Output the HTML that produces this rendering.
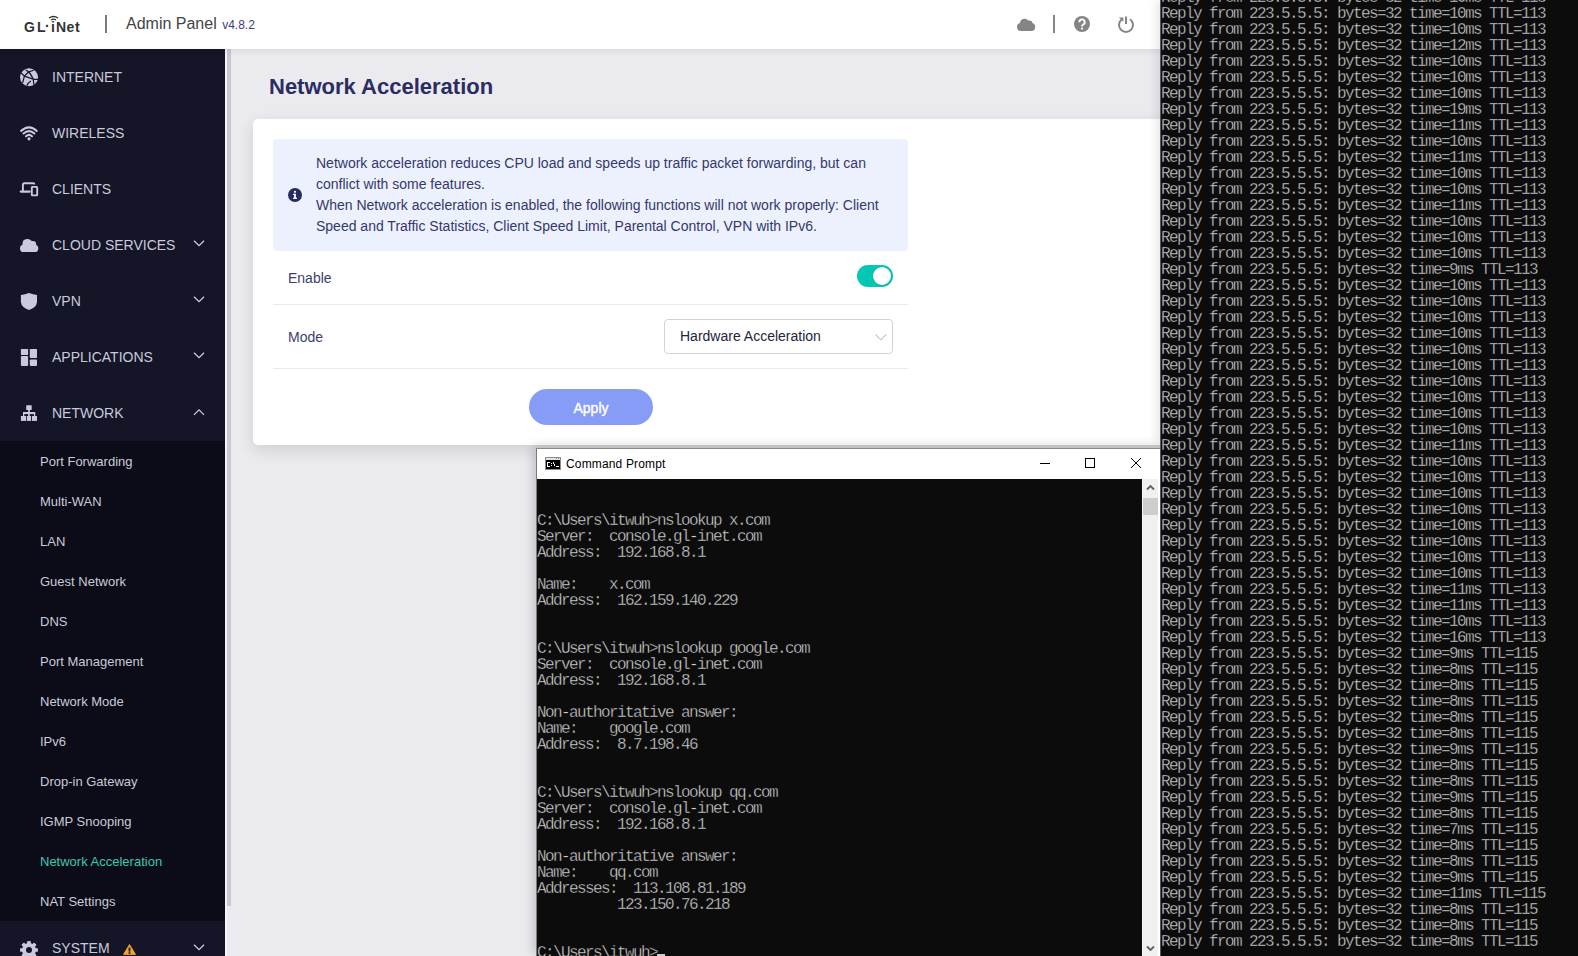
<!DOCTYPE html>
<html><head><meta charset="utf-8">
<style>
*{margin:0;padding:0;box-sizing:border-box}
html,body{width:1578px;height:956px;overflow:hidden;background:#ebeaef;font-family:"Liberation Sans",sans-serif;position:relative}
.abs{position:absolute}
#header{left:0;top:0;width:1578px;height:49px;background:#fff;box-shadow:0 1px 8px rgba(0,0,0,.10);z-index:4}
#sidebar{left:0;top:49px;width:225px;height:907px;background:#141527;z-index:2}
#sbwhite{left:225px;top:49px;width:2px;height:907px;background:#f6f6fa;z-index:2}
#sbthumb{left:227px;top:49px;width:4px;height:857px;background:#c8c9d5;z-index:2}
.mi{position:absolute;left:0;width:225px;height:56px;color:#c9cadb;font-size:14px;}
.mi .t{position:absolute;left:52px;top:19px;line-height:18px;white-space:nowrap}
.mi svg.ic{position:absolute;left:20px;top:17px;width:20px;height:20px;overflow:visible}
.mi svg.ch{position:absolute;left:193px;top:23px;width:12px;height:8px;overflow:visible}
#submenu{left:0;top:441px;width:225px;height:480px;background:#0b0c17;z-index:3}
.si{position:absolute;left:40px;font-size:13px;color:#c9cadb;line-height:16px;white-space:nowrap}
#title{left:269px;top:74px;font-size:22px;font-weight:bold;color:#2a2d62;line-height:26px;white-space:nowrap}
#card{left:253px;top:119px;width:940px;height:326px;background:#fff;border-radius:5px;box-shadow:0 5px 16px rgba(0,0,0,.12)}
#info{left:273px;top:139px;width:635px;height:112px;background:#edf1fd;border-radius:4px}
.itxt{position:absolute;left:316px;font-size:14px;color:#34386c;line-height:21px;white-space:nowrap}
.lbl{position:absolute;left:288px;font-size:14px;color:#3b3e70;line-height:18px}
.hr{position:absolute;left:273px;width:635px;height:1px;background:#e9e9ef}
#toggle{left:857px;top:265px;width:36px;height:22px;border-radius:11px;background:#03c6b3}
#knob{left:873px;top:267px;width:18px;height:18px;border-radius:50%;background:#fff;box-shadow:0 0 2px rgba(0,0,0,.15)}
#select{left:664px;top:319px;width:229px;height:35px;border:1px solid #d3d4db;border-radius:4px;background:#fff}
#apply{left:529px;top:389px;width:124px;height:36px;border-radius:18px;background:#869cf7;color:#fff;font-size:14px;text-align:center;line-height:38px;-webkit-text-stroke:0.4px #fff}
#rterm{left:1160px;top:0;width:418px;height:956px;background:#0c0c0c;border-left:1px solid #5a5a5a;z-index:10;box-shadow:-3px 0 10px rgba(0,0,0,.10)}
pre.mono{font-family:"Liberation Mono",monospace;font-size:16px;letter-spacing:-1.6px;line-height:16px;color:#d4d4d4;white-space:pre;-webkit-text-stroke:0.35px #0c0c0c}
#rtext{z-index:11;left:1161px;top:-10px}
#cmd{left:536px;top:448px;width:624px;height:508px;background:#fff;border-top:1px solid #8a8a8a;border-left:1px solid #7a7a7a;z-index:12;box-shadow:-3px -2px 10px rgba(0,0,0,.18)}
#cmdcon{left:537px;top:479px;width:605px;height:477px;background:#0c0c0c;overflow:hidden;z-index:13}
#cmdtext{left:537px;top:481px;z-index:14}
#cmdsb{left:1142px;top:479px;width:16px;height:477px;background:#f0f0f0;border-left:1px solid #fafafa;z-index:13}
</style></head><body>
<div id="header" class="abs">
  <div class="abs" style="left:24px;top:18px;font-size:14px;font-weight:bold;color:#333;line-height:18px">
    <span class="abs" style="left:0">G</span><span class="abs" style="left:13px">L</span><span class="abs" style="left:21px;top:-1px">·</span><span class="abs" style="left:27px">i</span><span class="abs" style="left:32px">N</span><span class="abs" style="left:42.5px">e</span><span class="abs" style="left:51px">t</span>
  </div>
  <svg class="abs" style="left:48px;top:15.4px" width="11" height="6" viewBox="0 0 11 6"><path d="M1 3Q5.5 0 10 3" fill="none" stroke="#333" stroke-width="1.3"/><path d="M3 5Q5.5 3.3 8 5" fill="none" stroke="#333" stroke-width="1.3"/></svg>
  <div class="abs" style="left:105px;top:15px;width:2px;height:18px;background:#7a7a7a"></div>
  <div class="abs" style="left:126px;top:14px;font-size:16px;color:#444;line-height:20px;white-space:nowrap">Admin Panel <span style="font-size:12px;color:#3b3e7a;margin-left:1px">v4.8.2</span></div>
  <svg class="abs" style="left:1017px;top:18px" width="19" height="13" viewBox="0 0 19 13"><circle cx="7.5" cy="5.3" r="4.6" fill="#858585"/><circle cx="12.3" cy="5.8" r="3.2" fill="#858585"/><rect x="0" y="5" width="18.2" height="8" rx="4" fill="#858585"/></svg>
  <div class="abs" style="left:1053px;top:15px;width:2px;height:18px;background:#858585"></div>
  <svg class="abs" style="left:1074px;top:16px" width="16" height="16" viewBox="0 0 16 16"><circle cx="8" cy="8" r="8" fill="#858585"/><path d="M5.3 6.2a2.7 2.7 0 1 1 4 2.3c-.9.5-1.3.9-1.3 1.9" fill="none" stroke="#fff" stroke-width="1.9"/><circle cx="8" cy="12.6" r="1.1" fill="#fff"/></svg>
  <svg class="abs" style="left:1117px;top:15px" width="18" height="18" viewBox="0 0 18 18"><path d="M5 4.2A7 7 0 1 0 13 4.2" fill="none" stroke="#858585" stroke-width="2"/><path d="M1.8 2.6h4.6v4.2z" fill="#858585"/><path d="M9 1.5v7.5" stroke="#858585" stroke-width="2"/></svg>
</div>

<div id="sidebar" class="abs"></div>
<div id="sbwhite" class="abs"></div>
<div id="sbthumb" class="abs"></div>

<div class="abs" style="left:0;top:49px;width:225px;height:392px;z-index:3">
  <div class="mi" style="top:0px"><svg class="ic" viewBox="0 0 20 20" style="top:19px"><circle cx="9.05" cy="9.25" r="9" fill="#c9cadb"/><path d="M5.6 2L8.8 3.75L13.65 2.26M8.8 3.75L4.4 8.1L1.2 5M4.4 8.1L2.6 14.8M4.4 8.1L13.2 11.1L18.2 11.35M8.8 3.75Q11.8 7.7 13.2 11.1L13.9 16.6M6.8 17.6Q8.3 14.6 10.9 13" fill="none" stroke="#141527" stroke-width="1.25"/></svg><span class="t">INTERNET</span></div>
  <div class="mi" style="top:56px"><svg class="ic" viewBox="0 0 20 20" style="top:21px"><path d="M1.1 4.9Q9 -2.3 16.8 4.9M3.5 7.5Q9 2.6 14.4 7.5M6 10.3Q9 7.6 12 10.3" fill="none" stroke="#c9cadb" stroke-width="2.1" stroke-linecap="round"/><circle cx="9" cy="12.8" r="1.6" fill="#c9cadb"/></svg><span class="t">WIRELESS</span></div>
  <div class="mi" style="top:112px"><svg class="ic" viewBox="0 0 20 20" style="top:21px"><path d="M2.9 9.6V2.6Q2.9 1.2 4.3 1.2H13.2Q14.4 1.2 14.4 2.6" fill="none" stroke="#c9cadb" stroke-width="1.9"/><path d="M0.8 9.6H9.6" stroke="#c9cadb" stroke-width="2.3" stroke-linecap="round"/><rect x="11.8" y="4.9" width="5.4" height="8.5" rx="0.6" fill="none" stroke="#c9cadb" stroke-width="1.9"/></svg><span class="t">CLIENTS</span></div>
  <div class="mi" style="top:168px"><svg class="ic" viewBox="0 0 20 20" style="top:21px"><circle cx="7.3" cy="5.8" r="4.9" fill="#c9cadb"/><circle cx="12.8" cy="6.4" r="3.4" fill="#c9cadb"/><rect x="0" y="6.8" width="18.3" height="7.2" rx="3.6" fill="#c9cadb"/></svg><span class="t">CLOUD SERVICES</span><svg class="ch" viewBox="0 0 12 8"><path d="M1 .7l5 5 5-5" fill="none" stroke="#c9cadb" stroke-width="1.3"/></svg></div>
  <div class="mi" style="top:224px"><svg class="ic" viewBox="0 0 20 20" style="top:19px"><path d="M9 0.9Q13 2.3 17 3.1V10Q16.5 15.5 9 18Q1.5 15.5 0.9 10V3.1Q5 2.3 9 0.9Z" fill="#c9cadb"/></svg><span class="t">VPN</span><svg class="ch" viewBox="0 0 12 8"><path d="M1 .7l5 5 5-5" fill="none" stroke="#c9cadb" stroke-width="1.3"/></svg></div>
  <div class="mi" style="top:280px"><svg class="ic" viewBox="0 0 20 20" style="top:19px"><rect x="0.9" y="0.9" width="7.2" height="6" rx="0.6" fill="#c9cadb"/><rect x="9.8" y="0.9" width="7.2" height="9" rx="0.6" fill="#c9cadb"/><rect x="0.9" y="8.1" width="7.2" height="9.8" rx="0.8" fill="#c9cadb"/><rect x="9.8" y="11.5" width="7.2" height="6.4" rx="0.8" fill="#c9cadb"/></svg><span class="t">APPLICATIONS</span><svg class="ch" viewBox="0 0 12 8"><path d="M1 .7l5 5 5-5" fill="none" stroke="#c9cadb" stroke-width="1.3"/></svg></div>
  <div class="mi" style="top:336px"><svg class="ic" viewBox="0 0 20 20" style="top:19px"><rect x="6.2" y="1.2" width="5.5" height="4.9" rx="0.6" fill="#c9cadb"/><rect x="8.1" y="6" width="1.7" height="6" fill="#c9cadb"/><rect x="3" y="8" width="12.2" height="2.1" fill="#c9cadb"/><rect x="3" y="9" width="1.3" height="3" fill="#c9cadb"/><rect x="13.9" y="9" width="1.3" height="3" fill="#c9cadb"/><rect x="0.9" y="12" width="5.2" height="4.9" fill="#c9cadb"/><rect x="6.9" y="12" width="4.2" height="4.9" fill="#c9cadb"/><rect x="12" y="12" width="5" height="4.9" fill="#c9cadb"/></svg><span class="t">NETWORK</span><svg class="ch" viewBox="0 0 12 8"><path d="M1 6.9l5-5 5 5" fill="none" stroke="#c9cadb" stroke-width="1.3"/></svg></div>
</div>

<div id="submenu" class="abs">
  <div class="si" style="top:13px">Port Forwarding</div>
  <div class="si" style="top:53px">Multi-WAN</div>
  <div class="si" style="top:93px">LAN</div>
  <div class="si" style="top:133px">Guest Network</div>
  <div class="si" style="top:173px">DNS</div>
  <div class="si" style="top:213px">Port Management</div>
  <div class="si" style="top:253px">Network Mode</div>
  <div class="si" style="top:293px">IPv6</div>
  <div class="si" style="top:333px">Drop-in Gateway</div>
  <div class="si" style="top:373px">IGMP Snooping</div>
  <div class="si" style="top:413px;color:#3ec7b3">Network Acceleration</div>
  <div class="si" style="top:453px">NAT Settings</div>
</div>
<div class="abs" style="left:0;top:921px;width:225px;height:35px;z-index:3;overflow:hidden">
  <div class="mi" style="top:0px"><svg class="ic" viewBox="0 0 20 20" style="top:20px;left:19px"><g fill="#c9cadb"><circle cx="10" cy="9" r="7"/><rect x="8.2" y="0" width="3.6" height="18" rx="0.8"/><rect x="8.2" y="0" width="3.6" height="18" rx="0.8" transform="rotate(45 10 9)"/><rect x="8.2" y="0" width="3.6" height="18" rx="0.8" transform="rotate(90 10 9)"/><rect x="8.2" y="0" width="3.6" height="18" rx="0.8" transform="rotate(135 10 9)"/></g><circle cx="10" cy="9" r="3" fill="#141527"/></svg><span class="t" style="top:18px">SYSTEM</span>
  <svg class="abs" style="left:123px;top:23px" width="13" height="11" viewBox="0 0 13 11"><path d="M6.5 0.5L12.6 10.6H0.4Z" fill="#f5a623" stroke="#f5a623" stroke-width="0.8" stroke-linejoin="round"/><rect x="5.6" y="3.6" width="1.8" height="4" fill="#141527"/><rect x="5.6" y="8.2" width="1.8" height="1.6" fill="#141527"/></svg>
  <svg class="ch" viewBox="0 0 12 8"><path d="M1 .7l5 5 5-5" fill="none" stroke="#c9cadb" stroke-width="1.3"/></svg></div>
</div>

<div id="title" class="abs">Network Acceleration</div>
<div id="card" class="abs"></div>
<div id="info" class="abs"></div>
<svg class="abs" style="left:288px;top:188px" width="14" height="14" viewBox="0 0 14 14"><circle cx="7" cy="7" r="7" fill="#262b60"/><rect x="6.1" y="5.8" width="1.8" height="4.6" fill="#fff"/><rect x="5" y="5.8" width="2.5" height="1.2" fill="#fff"/><rect x="5" y="9.6" width="4" height="1.3" fill="#fff"/><circle cx="7" cy="3.8" r="1.1" fill="#fff"/></svg>
<div class="itxt" style="top:153px">Network acceleration reduces CPU load and speeds up traffic packet forwarding, but can</div>
<div class="itxt" style="top:174px">conflict with some features.</div>
<div class="itxt" style="top:195px">When Network acceleration is enabled, the following functions will not work properly: Client</div>
<div class="itxt" style="top:216px">Speed and Traffic Statistics, Client Speed Limit, Parental Control, VPN with IPv6.</div>
<div class="lbl" style="top:269px">Enable</div>
<div id="toggle" class="abs"></div><div id="knob" class="abs"></div>
<div class="hr" style="top:304px"></div>
<div class="lbl" style="top:328px">Mode</div>
<div id="select" class="abs"><span class="abs" style="left:15px;top:8px;font-size:14px;color:#23253a;white-space:nowrap">Hardware Acceleration</span>
<svg class="abs" style="left:210px;top:14px" width="12" height="7" viewBox="0 0 12 7"><path d="M.5 .5l5.3 5.3 5.3-5.3" fill="none" stroke="#c3c5ce" stroke-width="1.1"/></svg></div>
<div class="hr" style="top:368px"></div>
<div id="apply" class="abs">Apply</div>

<div id="cmd" class="abs"></div>
<svg class="abs" style="left:545px;top:457px;z-index:13" width="16" height="13" viewBox="0 0 16 13"><rect x="0" y="0" width="16" height="13" fill="#8c8c8c"/><rect x="1" y="1" width="14" height="2" fill="#dfe3ea"/><rect x="11" y="1" width="1" height="1" fill="#7a8ab0"/><rect x="13" y="1" width="1" height="1" fill="#7a8ab0"/><rect x="1" y="3" width="14" height="9" fill="#000"/><g fill="#fff"><rect x="2" y="5" width="3" height="1"/><rect x="2" y="9" width="3" height="1"/><rect x="2" y="5" width="1" height="5"/><rect x="6" y="6" width="1" height="1"/><rect x="6" y="8" width="1" height="1"/><rect x="8" y="5" width="1" height="2"/><rect x="9" y="7" width="1" height="2"/><rect x="11" y="9" width="3" height="1"/></g></svg>
<div class="abs" style="left:566px;top:457px;font-size:12px;color:#000;line-height:15px;z-index:13;letter-spacing:0.15px">Command Prompt</div>
<svg class="abs" style="left:1036px;top:454px;z-index:13" width="110" height="18" viewBox="0 0 110 18"><path d="M4 9.5h10" stroke="#000" stroke-width="1"/><rect x="49.5" y="4.5" width="9" height="9" fill="none" stroke="#000" stroke-width="1"/><path d="M95 4l10 10M105 4l-10 10" stroke="#000" stroke-width="1"/></svg>
<div id="cmdcon" class="abs"></div>
<pre id="cmdtext" class="abs mono">


C:\Users\itwuh&gt;nslookup x.com
Server:  console.gl-inet.com
Address:  192.168.8.1

Name:    x.com
Address:  162.159.140.229


C:\Users\itwuh&gt;nslookup google.com
Server:  console.gl-inet.com
Address:  192.168.8.1

Non-authoritative answer:
Name:    google.com
Address:  8.7.198.46


C:\Users\itwuh&gt;nslookup qq.com
Server:  console.gl-inet.com
Address:  192.168.8.1

Non-authoritative answer:
Name:    qq.com
Addresses:  113.108.81.189
          123.150.76.218


C:\Users\itwuh&gt;</pre>
<div class="abs" style="left:657px;top:954px;width:8px;height:2px;background:#cccccc;z-index:14"></div>
<div id="cmdsb" class="abs">
  <svg class="abs" style="left:3px;top:5px" width="9" height="7" viewBox="0 0 9 7"><path d="M1 5.5l3.5-3.5 3.5 3.5" fill="none" stroke="#606060" stroke-width="1.8"/></svg>
  <div class="abs" style="left:0px;top:19px;width:15px;height:17px;background:#cdcdcd"></div>
  <svg class="abs" style="left:3px;top:466px" width="9" height="7" viewBox="0 0 9 7"><path d="M1 1.5l3.5 3.5 3.5-3.5" fill="none" stroke="#606060" stroke-width="1.8"/></svg>
</div>

<div id="rterm" class="abs"></div>
<pre id="rtext" class="abs mono">Reply from 223.5.5.5: bytes=32 time=10ms TTL=113
Reply from 223.5.5.5: bytes=32 time=10ms TTL=113
Reply from 223.5.5.5: bytes=32 time=10ms TTL=113
Reply from 223.5.5.5: bytes=32 time=12ms TTL=113
Reply from 223.5.5.5: bytes=32 time=10ms TTL=113
Reply from 223.5.5.5: bytes=32 time=10ms TTL=113
Reply from 223.5.5.5: bytes=32 time=10ms TTL=113
Reply from 223.5.5.5: bytes=32 time=19ms TTL=113
Reply from 223.5.5.5: bytes=32 time=11ms TTL=113
Reply from 223.5.5.5: bytes=32 time=10ms TTL=113
Reply from 223.5.5.5: bytes=32 time=11ms TTL=113
Reply from 223.5.5.5: bytes=32 time=10ms TTL=113
Reply from 223.5.5.5: bytes=32 time=10ms TTL=113
Reply from 223.5.5.5: bytes=32 time=11ms TTL=113
Reply from 223.5.5.5: bytes=32 time=10ms TTL=113
Reply from 223.5.5.5: bytes=32 time=10ms TTL=113
Reply from 223.5.5.5: bytes=32 time=10ms TTL=113
Reply from 223.5.5.5: bytes=32 time=9ms TTL=113
Reply from 223.5.5.5: bytes=32 time=10ms TTL=113
Reply from 223.5.5.5: bytes=32 time=10ms TTL=113
Reply from 223.5.5.5: bytes=32 time=10ms TTL=113
Reply from 223.5.5.5: bytes=32 time=10ms TTL=113
Reply from 223.5.5.5: bytes=32 time=10ms TTL=113
Reply from 223.5.5.5: bytes=32 time=10ms TTL=113
Reply from 223.5.5.5: bytes=32 time=10ms TTL=113
Reply from 223.5.5.5: bytes=32 time=10ms TTL=113
Reply from 223.5.5.5: bytes=32 time=10ms TTL=113
Reply from 223.5.5.5: bytes=32 time=10ms TTL=113
Reply from 223.5.5.5: bytes=32 time=11ms TTL=113
Reply from 223.5.5.5: bytes=32 time=10ms TTL=113
Reply from 223.5.5.5: bytes=32 time=10ms TTL=113
Reply from 223.5.5.5: bytes=32 time=10ms TTL=113
Reply from 223.5.5.5: bytes=32 time=10ms TTL=113
Reply from 223.5.5.5: bytes=32 time=10ms TTL=113
Reply from 223.5.5.5: bytes=32 time=10ms TTL=113
Reply from 223.5.5.5: bytes=32 time=10ms TTL=113
Reply from 223.5.5.5: bytes=32 time=10ms TTL=113
Reply from 223.5.5.5: bytes=32 time=11ms TTL=113
Reply from 223.5.5.5: bytes=32 time=11ms TTL=113
Reply from 223.5.5.5: bytes=32 time=10ms TTL=113
Reply from 223.5.5.5: bytes=32 time=16ms TTL=113
Reply from 223.5.5.5: bytes=32 time=9ms TTL=115
Reply from 223.5.5.5: bytes=32 time=8ms TTL=115
Reply from 223.5.5.5: bytes=32 time=8ms TTL=115
Reply from 223.5.5.5: bytes=32 time=8ms TTL=115
Reply from 223.5.5.5: bytes=32 time=8ms TTL=115
Reply from 223.5.5.5: bytes=32 time=8ms TTL=115
Reply from 223.5.5.5: bytes=32 time=9ms TTL=115
Reply from 223.5.5.5: bytes=32 time=8ms TTL=115
Reply from 223.5.5.5: bytes=32 time=8ms TTL=115
Reply from 223.5.5.5: bytes=32 time=9ms TTL=115
Reply from 223.5.5.5: bytes=32 time=8ms TTL=115
Reply from 223.5.5.5: bytes=32 time=7ms TTL=115
Reply from 223.5.5.5: bytes=32 time=8ms TTL=115
Reply from 223.5.5.5: bytes=32 time=8ms TTL=115
Reply from 223.5.5.5: bytes=32 time=9ms TTL=115
Reply from 223.5.5.5: bytes=32 time=11ms TTL=115
Reply from 223.5.5.5: bytes=32 time=8ms TTL=115
Reply from 223.5.5.5: bytes=32 time=8ms TTL=115
Reply from 223.5.5.5: bytes=32 time=8ms TTL=115</pre>
</body></html>
